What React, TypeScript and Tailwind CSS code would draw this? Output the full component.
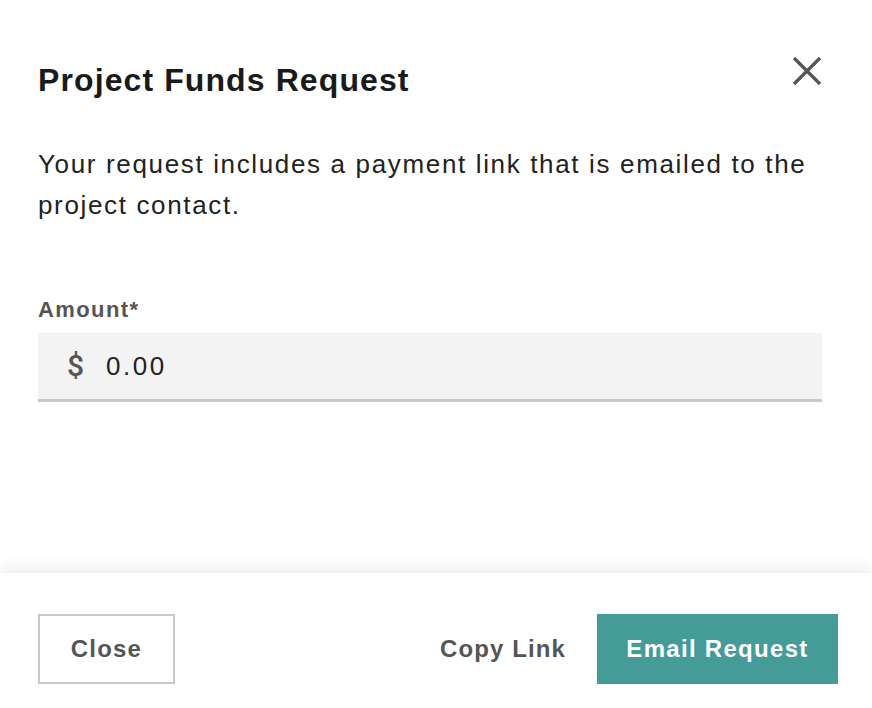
import React from "react";

export default function App() {
  return (
    <div
      className="w-[872px] h-[708px] bg-white flex flex-col overflow-hidden"
      style={{ fontFamily: '"Liberation Sans", Arial, sans-serif' }}
    >
      <div className="flex-1 pl-[38px] pr-[50px]">
        <div className="flex items-start justify-between pt-[60px]">
          <h1 className="text-[32px] leading-[40px] font-bold text-[#1a1a1a] tracking-[1.1px]">
            Project Funds Request
          </h1>
          <button className="mt-[-4px] w-[30px] h-[30px] flex items-center justify-center" aria-label="Close">
            <svg width="30" height="30" viewBox="0 0 30 30">
              <path d="M2 2 L28 28 M28 2 L2 28" stroke="#555555" strokeWidth="3.2" strokeLinecap="butt" />
            </svg>
          </button>
        </div>
        <p className="mt-[44px] text-[26px] leading-[41px] text-[#222222] tracking-[1.65px]">
          Your request includes a payment link that is emailed to the project contact.
        </p>
        <label className="block mt-[70px] text-[22px] leading-[28px] font-bold text-[#555555] tracking-[1.4px]">
          Amount*
        </label>
        <div className="mt-[9px] h-[69px] bg-[#f3f3f3] border-b-[3px] border-[#c8c8c8] flex items-center pl-[29px]">
          <span
            className="text-[30px] text-[#555555] leading-none font-medium"
            style={{ fontFamily: 'Roboto, "Liberation Sans", sans-serif' }}
          >
            $
          </span>
          <span className="ml-[22px] text-[26px] text-[#222222] tracking-[2.5px] leading-none">0.00</span>
        </div>
      </div>
      <div className="h-[135px] bg-white shadow-[0_-6px_14px_rgba(0,0,0,0.07)] pl-[38px] pr-[34px] pt-[41px] flex items-start justify-between">
        <button className="w-[137px] h-[70px] border-2 border-[#c8c8c8] text-[24px] font-bold text-[#555555] tracking-[1.2px]">
          Close
        </button>
        <div className="flex items-center h-[70px]">
          <button className="text-[24px] font-bold text-[#555555] tracking-[1.1px] mr-[31px]">Copy Link</button>
          <button className="w-[241px] h-[70px] bg-[#459b98] text-white text-[24px] font-bold tracking-[1.3px]">
            Email Request
          </button>
        </div>
      </div>
    </div>
  );
}
